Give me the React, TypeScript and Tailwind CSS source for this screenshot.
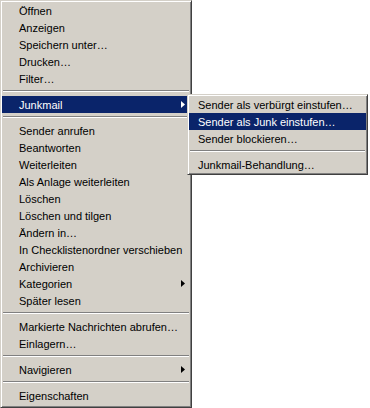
import type { ReactNode } from "react";

type Entry = { label: string; submenu?: boolean; active?: boolean } | "sep";

const MAIN_ITEMS: Entry[] = [
  { label: "Öffnen" },
  { label: "Anzeigen" },
  { label: "Speichern unter…" },
  { label: "Drucken…" },
  { label: "Filter…" },
  "sep",
  { label: "Junkmail", submenu: true, active: true },
  "sep",
  { label: "Sender anrufen" },
  { label: "Beantworten" },
  { label: "Weiterleiten" },
  { label: "Als Anlage weiterleiten" },
  { label: "Löschen" },
  { label: "Löschen und tilgen" },
  { label: "Ändern in…" },
  { label: "In Checklistenordner verschieben" },
  { label: "Archivieren" },
  { label: "Kategorien", submenu: true },
  { label: "Später lesen" },
  "sep",
  { label: "Markierte Nachrichten abrufen…" },
  { label: "Einlagern…" },
  "sep",
  { label: "Navigieren", submenu: true },
  "sep",
  { label: "Eigenschaften" },
];

const JUNK_ITEMS: Entry[] = [
  { label: "Sender als verbürgt einstufen…" },
  { label: "Sender als Junk einstufen…", active: true },
  { label: "Sender blockieren…" },
  "sep",
  { label: "Junkmail-Behandlung…" },
];

function Arrow({ light }: { light?: boolean }) {
  return (
    <svg width="4" height="7" viewBox="0 0 4 7" className="shrink-0" aria-hidden="true">
      <path d="M0 0 L4 3.5 L0 7 Z" fill={light ? "#ffffff" : "#000000"} />
    </svg>
  );
}

function Panel({ className, children }: { className?: string; children: ReactNode }) {
  return (
    <div
      className={`flex flex-col bg-[#d4d0c8] p-px border border-t-[#d4d0c8] border-l-[#d4d0c8] border-r-[#404040] border-b-[#404040] shadow-[inset_1px_1px_0_#ffffff,inset_-1px_-1px_0_#808080] ${className ?? ""}`}
    >
      {children}
    </div>
  );
}

function MenuList({ items, indent }: { items: Entry[]; indent: string }) {
  return (
    <>
      {items.map((item, i) =>
        item === "sep" ? (
          <div key={i} className="flex h-[9px] flex-col pt-[3px] px-px">
            <div className="h-px bg-[#808080]" />
            <div className="h-px bg-white" />
          </div>
        ) : (
          <div
            key={i}
            className={`flex h-[17px] items-center pr-[5px] ${indent} ${
              item.active ? "bg-[#0a246a] text-white" : "text-black"
            }`}
          >
            <span className="flex-1 whitespace-nowrap pt-px">{item.label}</span>
            {item.submenu && <Arrow light={item.active} />}
          </div>
        )
      )}
    </>
  );
}

export default function App() {
  return (
    <div className="relative h-[408px] w-[370px] overflow-hidden bg-white font-['Liberation_Sans',Tahoma,sans-serif] text-[11px] leading-none">
      <Panel className="w-[192px] h-[408px]">
        <MenuList items={MAIN_ITEMS} indent="pl-[17px]" />
      </Panel>

      {/* Junkmail flyout */}
      <div className="absolute left-[187px] top-[94px]">
        <Panel className="w-[181px]">
          <MenuList items={JUNK_ITEMS} indent="pl-[9px]" />
        </Panel>
      </div>
    </div>
  );
}
